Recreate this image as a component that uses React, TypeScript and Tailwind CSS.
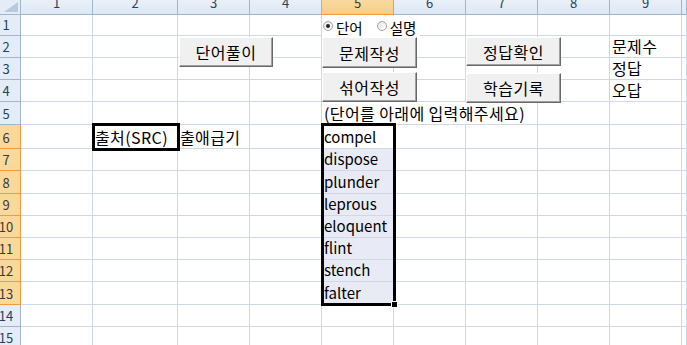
import React from 'react';

const FONT = '"Noto Sans CJK KR", "Noto Sans", sans-serif';

const colCount = 10; // 9 full columns + a cut-off one on the right
const rowCount = 15;

// text content keyed by "row-col"
const cells: Record<string, string> = {
  '2-9': '문제수',
  '3-9': '정답',
  '4-9': '오답',
  '5-5': '(단어를 아래에 입력해주세요)',
  '6-2': '출처(SRC)',
  '6-3': '출애급기',
  '6-5': 'compel',
  '7-5': 'dispose',
  '8-5': 'plunder',
  '9-5': 'leprous',
  '10-5': 'eloquent',
  '11-5': 'flint',
  '12-5': 'stench',
  '13-5': 'falter',
};

const isSelectedRow = (r: number) => r >= 6 && r <= 13;
const hasHangul = (s: string) => /[\uac00-\ud7a3]/.test(s);

const Button: React.FC<{ label: string; className: string }> = ({ label, className }) => (
  <div
    className={`absolute flex items-center justify-center bg-[#f0f0f0] border border-t-white border-l-white border-r-[#696969] border-b-[#696969] shadow-[inset_-1px_-1px_0_#a0a0a0] text-[16px] tracking-[0.5px] text-black ${className}`}
  >
    {label}
  </div>
);

const Radio: React.FC<{ checked?: boolean }> = ({ checked }) => (
  <span className="shrink-0 w-[10px] h-[10px] rounded-full border border-[#a4a4a4] bg-gradient-to-br from-[#e6e6e6] to-white flex items-center justify-center">
    {checked && <span className="w-[4px] h-[4px] rounded-full bg-[#222]" />}
  </span>
);

export default function App() {
  const rows = Array.from({ length: rowCount }, (_, i) => i + 1);
  const cols = Array.from({ length: colCount }, (_, i) => i + 1);

  return (
    <div
      className="relative w-[687px] h-[345px] overflow-hidden bg-white"
      style={{ fontFamily: FONT }}
    >
      <div className="grid grid-cols-[21px_72px_85px_72px_72px_72px_72px_72px_72px_72px_1fr] grid-rows-[15px_21px_22px_22px_22px_23px_24px_22px_23px_22px_22px_22px_22px_23px_22px_22px]">
        {/* corner */}
        <div className="relative bg-[#e4ecf7] border-r border-b border-[#9eb6ce] overflow-hidden">
          <div className="absolute right-[2px] bottom-[2px] w-0 h-0 border-l-[14px] border-l-transparent border-b-[10px] border-b-[#b9c9dd]" />
        </div>
        {/* column headers */}
        {cols.map((c) => (
          <div
            key={`h-${c}`}
            className={`flex justify-center overflow-hidden border-r border-b text-[13px] leading-[14px] ${
              c === 5
                ? 'bg-gradient-to-b from-[#f9d99f] to-[#f6cf86] border-[#f29a3c] text-[#3a3a3a]'
                : 'bg-gradient-to-b from-[#eaf0f8] to-[#dde7f4] border-[#9eb6ce] text-[#27415f]'
            }`}
          >
            <span className="-mt-[4px]">{c <= 9 ? c : ''}</span>
          </div>
        ))}

        {rows.map((r) => (
          <React.Fragment key={r}>
            <div
              className={`flex items-end border-r border-b text-[13px] leading-[18px] ${
                isSelectedRow(r)
                  ? 'bg-[#fad89c] border-[#f29a3c] text-[#3a3a3a]'
                  : 'bg-[#e4ecf7] border-[#9eb6ce] text-[#27415f]'
              }`}
            >
              <span className="w-[12px] flex justify-center whitespace-nowrap pb-[1px]">{r}</span>
            </div>
            {cols.map((c) => {
              const text = cells[`${r}-${c}`];
              const noRight = r === 5 && (c === 5 || c === 6);
              const filled = c === 5 && r >= 7 && r <= 13;
              return (
                <div
                  key={`${r}-${c}`}
                  className={`relative flex items-end border-b border-[#d0d7e5] ${noRight ? '' : 'border-r'} ${
                    filled ? 'bg-[#e8ebf5]' : ''
                  }`}
                >
                  {text && (
                    <span
                      className={`absolute left-[2px] bottom-0 whitespace-nowrap text-black z-10 ${
                        hasHangul(text) ? 'text-[16px] leading-[22px] tracking-[0.4px]' : 'text-[15px] leading-[22px]'
                      }`}
                    >
                      {text}
                    </span>
                  )}
                </div>
              );
            })}
          </React.Fragment>
        ))}
      </div>

      {/* radio group object */}
      <div className="absolute left-[322px] top-[16px] w-[98px] h-[20px] bg-white overflow-hidden flex items-center text-[14.5px] text-black pl-[1px]">
        <Radio checked />
        <span className="ml-[3px] mr-[14px] leading-none mt-[5px]">단어</span>
        <Radio />
        <span className="ml-[3px] leading-none mt-[5px]">설명</span>
      </div>

      {/* buttons */}
      <Button label="단어풀이" className="left-[179px] top-[37px] w-[94px] h-[30px]" />
      <Button label="문제작성" className="left-[322px] top-[37px] w-[95px] h-[31px]" />
      <Button label="정답확인" className="left-[466px] top-[37px] w-[95px] h-[29px]" />
      <Button label="섞어작성" className="left-[322px] top-[72px] w-[95px] h-[30px]" />
      <Button label="학습기록" className="left-[466px] top-[73px] w-[95px] h-[30px]" />

      {/* thick border on 출처(SRC) */}
      <div className="absolute left-[92px] top-[123px] w-[88px] h-[28px] border-[3px] border-black pointer-events-none" />

      {/* selection outline */}
      <div className="absolute left-[321px] top-[123px] w-[75px] h-[183px] border-[3px] border-black pointer-events-none" />
      <div className="absolute left-[391px] top-[301px] w-[7px] h-[7px] bg-black border border-white" />
    </div>
  );
}
